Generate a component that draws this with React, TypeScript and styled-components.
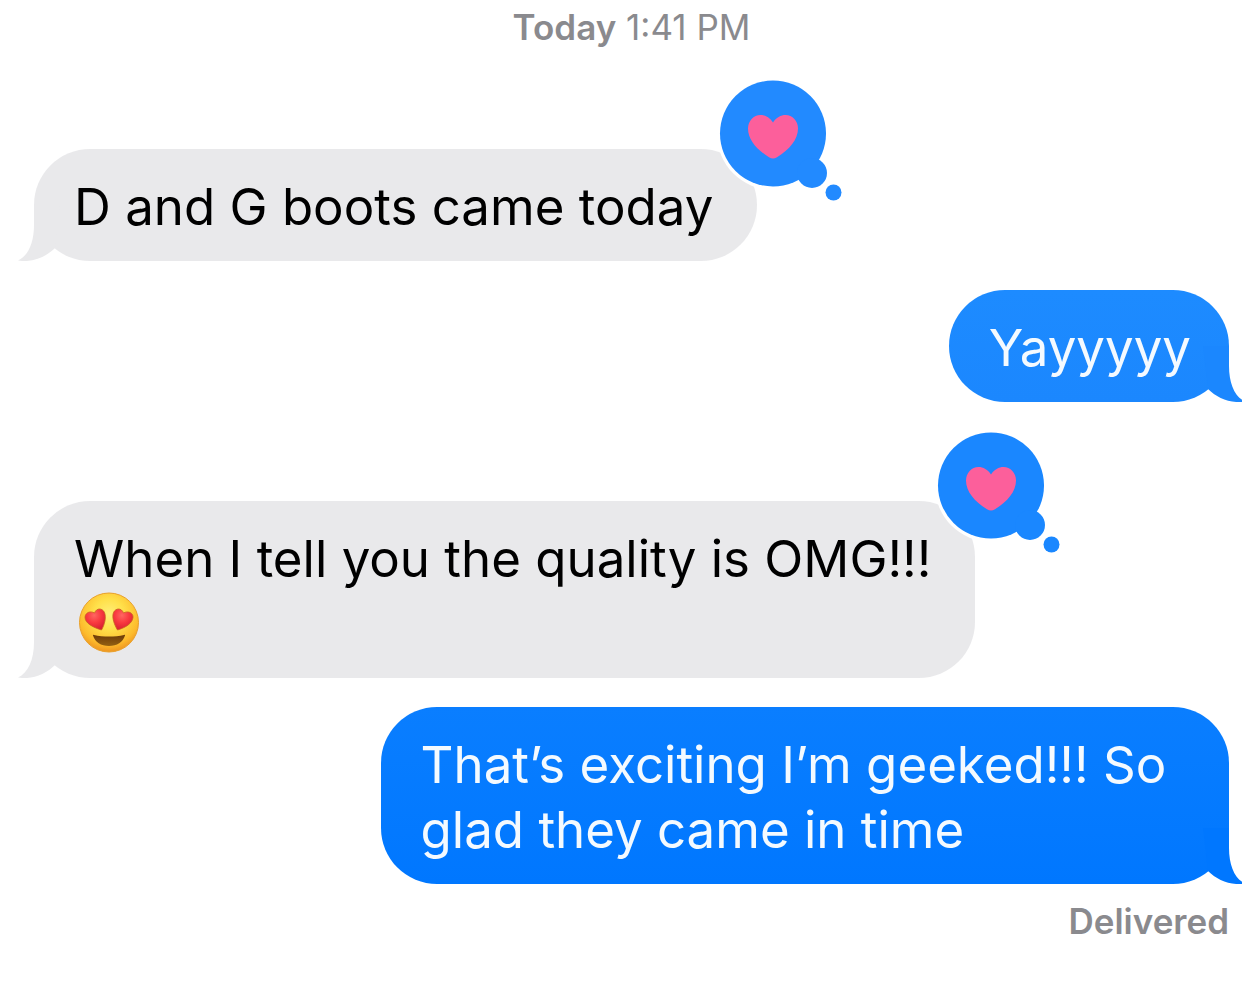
import React from "react";
import styled, { createGlobalStyle, css } from "styled-components";

const GlobalStyle = createGlobalStyle`
  *, *::before, *::after { box-sizing: border-box; }
  body {
    margin: 0;
    background: #ffffff;
    color: #000000;
    font-family: Inter, "Liberation Sans", sans-serif;
    overflow-x: hidden;
  }
`;

const Conversation = styled.main`
  min-height: 100vh;
  padding: 6px 13px 32px 34px;
  overflow: hidden;
`;

const Timestamp = styled.header`
  color: #8a8a8e;
  font-size: 35px;
  line-height: 42px;
  text-align: center;
`;

const Day = styled.span`
  font-weight: 600;
`;

const Thread = styled.ol`
  display: flex;
  flex-direction: column;
  gap: 29px;
  margin: 0;
  padding: 31px 0 0;
  list-style: none;
`;

type Side = "received" | "sent";

const Message = styled.li<{ $side: Side; $reacted?: boolean }>`
  display: flex;
  justify-content: ${(p) => (p.$side === "sent" ? "flex-end" : "flex-start")};
  padding-top: ${(p) => (p.$reacted ? 70 : 0)}px;
`;

const Bubble = styled.div<{ $side: Side; $from: string; $to: string }>`
  position: relative;
  max-width: ${(p) => (p.$side === "sent" ? 71 : 79)}%;
  padding: 25px ${(p) => (p.$side === "sent" ? 38 : 44)}px 22px 40px;
  border-radius: 56px;
  background: linear-gradient(${(p) => p.$from}, ${(p) => p.$to});
  color: ${(p) => (p.$side === "sent" ? "#f4faff" : "#000000")};
`;

const BubbleText = styled.p`
  margin: 0;
  font-size: 51px;
  line-height: 65px;
`;

const TailShape = styled.svg<{ $side: Side }>`
  position: absolute;
  bottom: 0;
  width: 42px;
  height: 56px;
  ${(p) =>
    p.$side === "sent"
      ? css`
          right: -16px;
          transform: scaleX(-1);
        `
      : css`
          left: -16px;
        `}
`;

const Tapback = styled.svg`
  position: absolute;
  top: -71px;
  right: -88px;
  width: 128px;
  height: 126px;
`;

const EmojiShape = styled.svg`
  display: block;
  width: 62px;
  height: 65px;
  margin-left: 4px;
`;

const Status = styled.footer`
  padding-top: 16px;
  color: #8a8a8e;
  font-size: 35px;
  font-weight: 600;
  line-height: 42px;
  text-align: right;
`;

function Tail({ side, color }: { side: Side; color: string }) {
  return (
    <TailShape $side={side} viewBox="0 0 42 56" aria-hidden="true">
      <path d="M16 0V20C16 38 10 51 0 55.500C14 58 28 52 37 43L42 0Z" fill={color} />
    </TailShape>
  );
}

function LoveTapback({ color }: { color: string }) {
  return (
    <Tapback viewBox="0 0 128 126" role="img" aria-label="Loved">
      <circle cx="56" cy="56" r="56" fill="#ffffff" />
      <circle cx="56" cy="55.500" r="53" fill={color} />
      <circle cx="95" cy="95" r="15" fill={color} />
      <circle cx="116.500" cy="114.500" r="8" fill={color} />
      <path
        d="M56 44.500C53 39.500 48 37 43.500 37C36.500 37 31 43 31 50.500C31 61.500 39.500 71.500 52 79.300C54.800 81 57.200 81 60 79.300C72.500 71.500 81 61.500 81 50.500C81 43 75.500 37 68.500 37C64 37 59 39.500 56 44.500Z"
        fill="#fc5f9b"
      />
    </Tapback>
  );
}

function HeartEyes() {
  return (
    <EmojiShape viewBox="0 2 62 65" role="img" aria-label="Smiling face with heart eyes">
      <defs>
        <radialGradient id="face" cx="50%" cy="36%" r="64%">
          <stop offset="0" stopColor="#fff07a" />
          <stop offset="0.400" stopColor="#ffe04a" />
          <stop offset="0.800" stopColor="#fdbb2c" />
          <stop offset="1" stopColor="#ee9421" />
        </radialGradient>
        <linearGradient id="mouth" x1="0" y1="0" x2="0" y2="1">
          <stop offset="0" stopColor="#6d3b08" />
          <stop offset="1" stopColor="#936012" />
        </linearGradient>
        <radialGradient id="eye" cx="45%" cy="30%" r="70%">
          <stop offset="0" stopColor="#ff6661" />
          <stop offset="0.500" stopColor="#f93a40" />
          <stop offset="1" stopColor="#d81f31" />
        </radialGradient>
      </defs>
      <circle cx="31" cy="33.500" r="29.500" fill="url(#face)" stroke="#e9a02a" strokeWidth="1" />
      <path
        d="M23.500 41C26.500 36 28.500 28.500 26.500 23.500C24.500 19 18.500 18.500 16.500 24C12.500 21.500 7 23.500 7 28.500C7 34 15 38.500 23.500 41Z"
        fill="url(#eye)"
        stroke="#c96221"
        strokeWidth="0.800"
      />
      <path
        d="M39.500 41C36.500 36 33.500 28.500 35.500 23.500C37.500 19 43.500 18.500 45.500 24C49.500 21.500 55.500 23.500 55 28.500C54.500 34 48 38.500 39.500 41Z"
        fill="url(#eye)"
        stroke="#c96221"
        strokeWidth="0.800"
      />
      <path
        d="M15 46.500Q14.500 45.500 16 46C25 48 37 48 46 46Q47.500 45.500 47 46.500C45 53 39 57 31 57S17 53 15 46.500Z"
        fill="url(#mouth)"
      />
    </EmojiShape>
  );
}

export default function App() {
  return (
    <>
      <GlobalStyle />
      <Conversation>
        <Timestamp>
          <Day>Today</Day> 1:41 PM
        </Timestamp>
        <Thread>
          <Message $side="received" $reacted>
            <Bubble $side="received" $from="#e9e9eb" $to="#e9e9eb">
              <Tail side="received" color="#e9e9eb" />
              <BubbleText>D and G boots came today</BubbleText>
              <LoveTapback color="#228aff" />
            </Bubble>
          </Message>
          <Message $side="sent">
            <Bubble $side="sent" $from="#1d8bff" $to="#1b87fe">
              <Tail side="sent" color="#1b87fe" />
              <BubbleText>Yayyyyy</BubbleText>
            </Bubble>
          </Message>
          <Message $side="received" $reacted>
            <Bubble $side="received" $from="#e9e9eb" $to="#e9e9eb">
              <Tail side="received" color="#e9e9eb" />
              <BubbleText>When I tell you the quality is OMG!!!</BubbleText>
              <HeartEyes />
              <LoveTapback color="#1a87ff" />
            </Bubble>
          </Message>
          <Message $side="sent">
            <Bubble $side="sent" $from="#0a7eff" $to="#0077ff">
              <Tail side="sent" color="#0077ff" />
              <BubbleText>That’s exciting I’m geeked!!! So glad they came in time</BubbleText>
            </Bubble>
          </Message>
        </Thread>
        <Status>Delivered</Status>
      </Conversation>
    </>
  );
}
